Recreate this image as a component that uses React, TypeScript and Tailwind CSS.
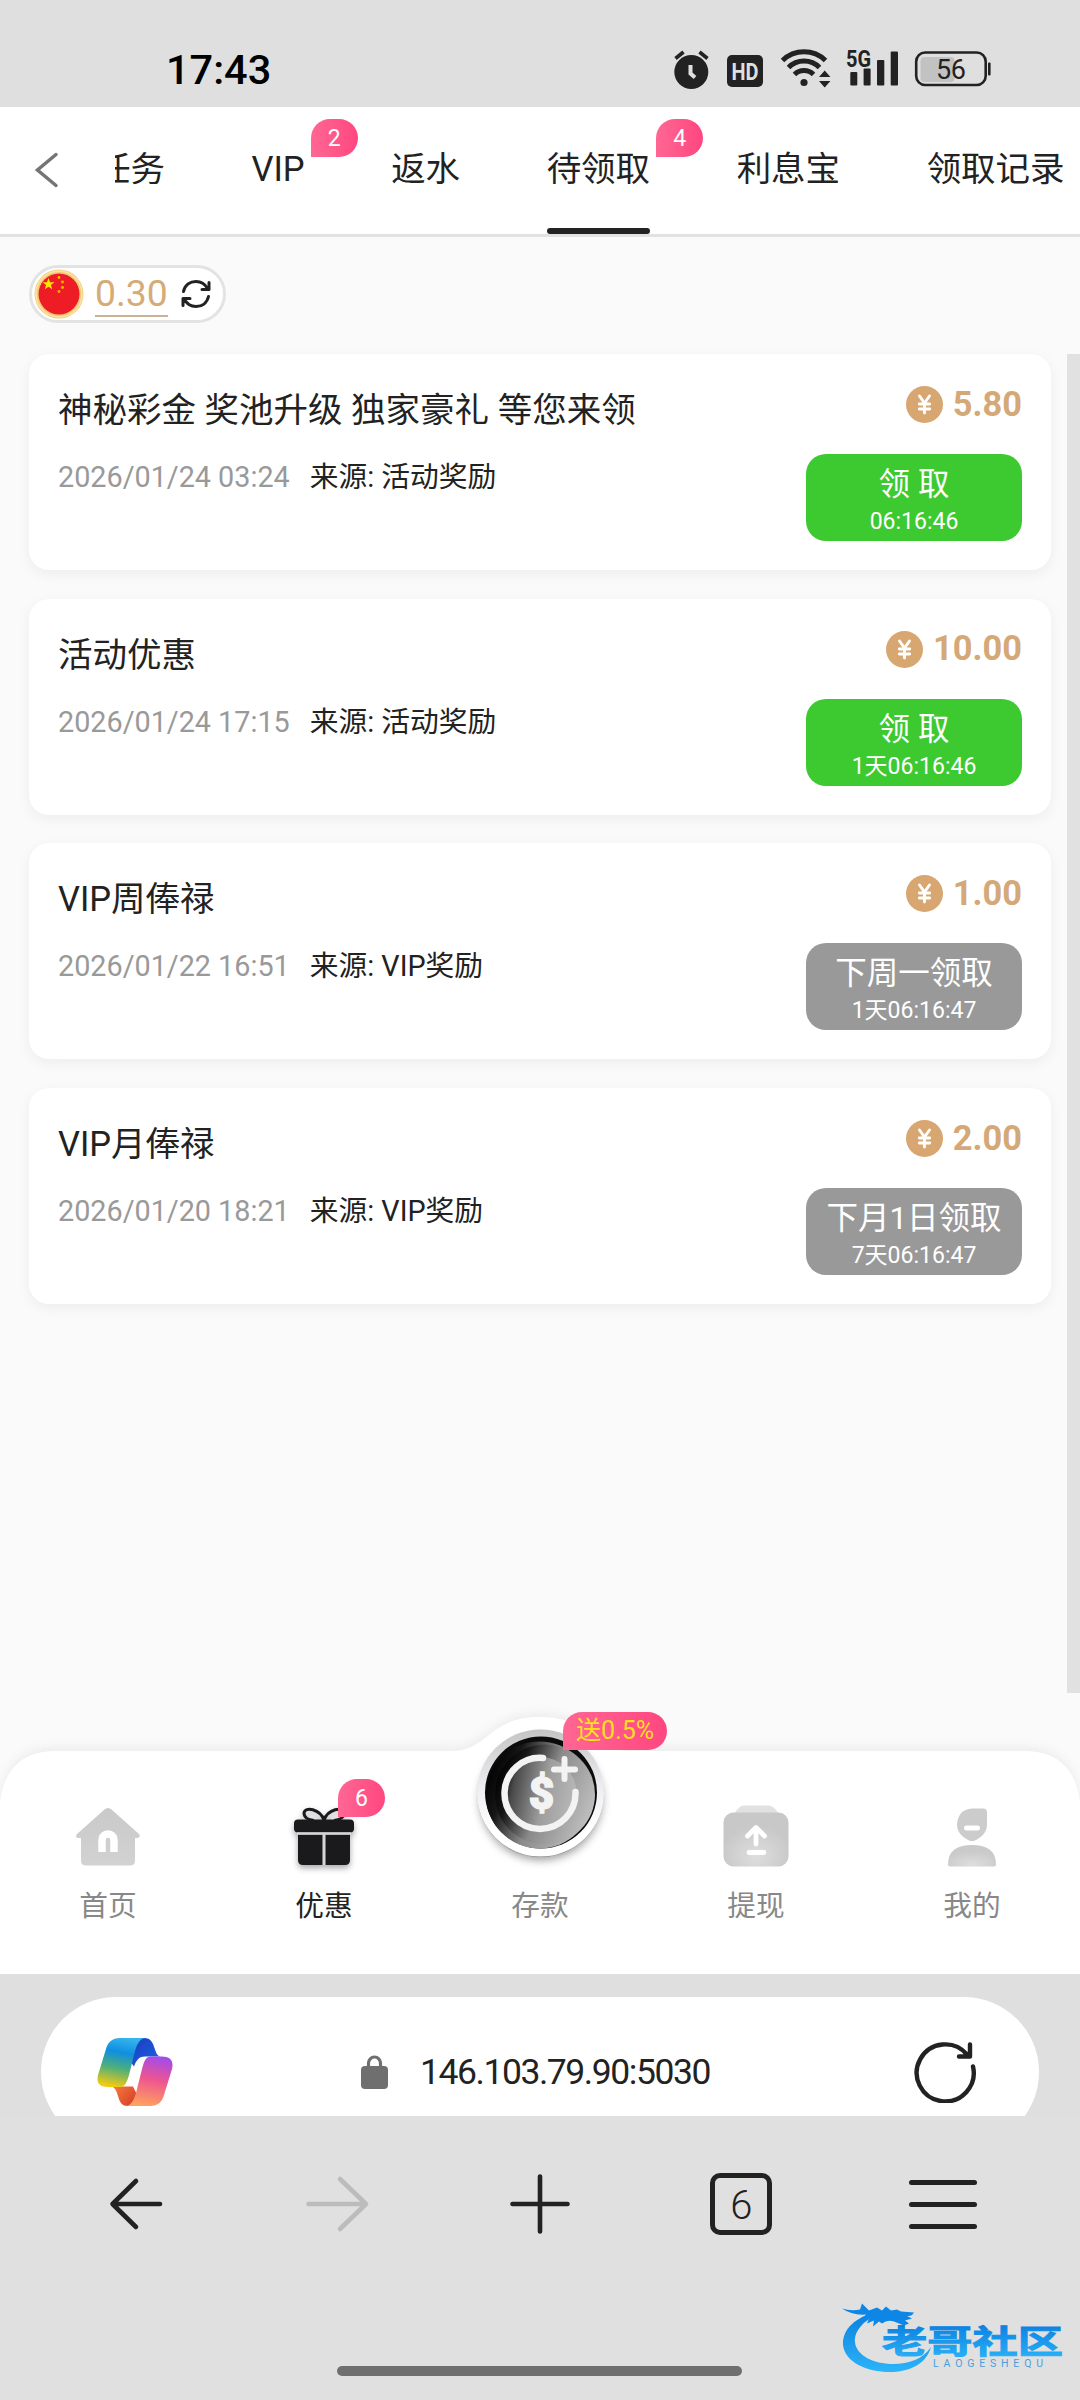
import { ReactNode } from 'react';

type Reward = {
  title: string;
  date: string;
  source: string;
  amount: string;
  action: string;
  countdown: string;
  ready: boolean;
};

const tabs = [
  { label: '任务' },
  { label: 'VIP', badge: 2 },
  { label: '返水' },
  { label: '待领取', badge: 4, active: true },
  { label: '利息宝' },
  { label: '领取记录' },
];

const rewards: Reward[] = [
  { title: '神秘彩金 奖池升级 独家豪礼 等您来领', date: '2026/01/24 03:24', source: '活动奖励', amount: '5.80', action: '领 取', countdown: '06:16:46', ready: true },
  { title: '活动优惠', date: '2026/01/24 17:15', source: '活动奖励', amount: '10.00', action: '领 取', countdown: '1天06:16:46', ready: true },
  { title: 'VIP周俸禄', date: '2026/01/22 16:51', source: 'VIP奖励', amount: '1.00', action: '下周一领取', countdown: '1天06:16:47', ready: false },
  { title: 'VIP月俸禄', date: '2026/01/20 18:21', source: 'VIP奖励', amount: '2.00', action: '下月1日领取', countdown: '7天06:16:47', ready: false },
];

function StatusBar() {
  return (
    <div className="flex h-[107px] shrink-0 items-start bg-[#dfdfdf] pl-[166px]">
      <div className="mt-[45px] w-[508px] text-[41.5px] leading-[50px] font-medium text-black">17:43</div>
      {/* alarm, HD, wifi, signal, battery */}
      <svg className="mt-[44px]" width="330" height="50" viewBox="674 44 330 50" fill="#222">
        <path d="M675.5 58.5l8-6.5M707.5 58.5l-8-6.5" stroke="#222" strokeWidth="3.6" />
        <circle cx="691.3" cy="72" r="17" />
        <path d="M690.5 65v8.5l4.5 4" stroke="#dfdfdf" strokeWidth="4" fill="none" />
        <rect x="727" y="55" width="36" height="32" rx="5" />
        <text x="745" y="79.5" textAnchor="middle" fontSize="23" fontWeight="700" textLength="27" lengthAdjust="spacingAndGlyphs" fill="#dfdfdf">HD</text>
        <g fill="none" stroke="#222" strokeWidth="5">
          <path d="M782.5 60.5a31 31 0 0 1 43 0" />
          <path d="M788.5 67.5a22 22 0 0 1 31 0" />
          <path d="M794.5 74.5a13.5 13.5 0 0 1 19 0" />
        </g>
        <circle cx="804" cy="82.5" r="3.6" />
        <path d="M819 77l5.7-6.5 5.7 6.5zM819 81l5.7 6.5 5.7-6.5z" />
        <text x="846" y="66.5" fontSize="23" fontWeight="700" textLength="25" lengthAdjust="spacingAndGlyphs">5G</text>
        <rect x="850.3" y="72" width="7" height="13.5" rx="1" />
        <rect x="863.6" y="68.5" width="7" height="17" rx="1" />
        <rect x="877" y="60" width="7.3" height="25.5" rx="1" />
        <rect x="890.7" y="51.5" width="7.3" height="34" rx="1" />
        <rect x="920.5" y="57" width="34" height="25" rx="4" fill="#c2c2c2" />
        <rect x="916.2" y="52.5" width="69.5" height="32.5" rx="9" fill="none" stroke="#222" strokeWidth="2.6" />
        <rect x="988" y="62.5" width="2.6" height="13" rx="1" />
        <text x="951" y="78.5" textAnchor="middle" fontSize="27" textLength="30">56</text>
      </svg>
    </div>
  );
}

function CountBadge({ count, className }: { count: number; className: string }) {
  return (
    <span className={`absolute flex h-[38px] w-[47px] items-center justify-center rounded-[22px] rounded-bl-none bg-gradient-to-r from-[#ff6694] to-[#ff4680] text-[23px] leading-none text-white ${className}`}>
      {count}
    </span>
  );
}

function TabBar() {
  return (
    <div className="flex h-[130px] shrink-0 border-b-[3px] border-[#e2e2e2] bg-white pl-[34px]">
      <svg className="mt-[45px] mr-[56px]" width="25" height="36" viewBox="0 0 25 36" fill="none" stroke="#757575" strokeWidth="3.5" strokeLinecap="round">
        <path d="M22 2.5L3.5 18 22 33.5" />
      </svg>
      {/* the strip is scrolled a little, so the first tab is cut off */}
      <div className="flex flex-1 gap-[86.5px] overflow-hidden">
        {tabs.map((tab) => (
          <div key={tab.label} className="relative flex h-full shrink-0 flex-col justify-between pt-[38px] text-[34.5px] leading-[48px] text-[#222] first:-ml-[19px]">
            <span>{tab.label}</span>
            {tab.badge && <CountBadge count={tab.badge} className="top-[12px] left-[calc(100%+6px)]" />}
            {tab.active && <span className="h-[6px] rounded-full bg-[#222]" />}
          </div>
        ))}
      </div>
    </div>
  );
}

function Balance() {
  return (
    <div className="mt-[28px] flex h-[58px] w-[197px] items-center rounded-full border-[3px] border-[#e2e3e3] bg-white pl-[2px]">
      <svg width="50" height="50" viewBox="0 0 50 50">
        <circle cx="25" cy="25" r="24.5" fill="#f3cb7c" />
        <circle cx="25" cy="25" r="23" fill="none" stroke="#fbe3a4" strokeWidth="1.5" />
        <circle cx="25" cy="25" r="20.5" fill="#ee1c25" />
        <path d="M14.5 9l1.5 4.3h4.5l-3.6 2.7 1.3 4.3-3.7-2.6-3.7 2.6 1.3-4.3L8.5 13.3H13z" fill="#ffe600" />
        <g fill="#ffb400">
          <circle cx="25" cy="8.5" r="1.4" />
          <circle cx="28.5" cy="13" r="1.4" />
          <circle cx="28.5" cy="18.5" r="1.4" />
          <circle cx="25" cy="22.5" r="1.4" />
        </g>
      </svg>
      <span className="ml-[11px] h-[46px] border-b-2 border-[#cbb293] text-[37.3px] leading-[44px] text-[#d5ab78]">0.30</span>
      <svg className="ml-[12px]" width="32" height="30" viewBox="0 0 32 30" fill="none" stroke="#222" strokeWidth="3" strokeLinecap="round" strokeLinejoin="round">
        <path d="M3.5 12.5C5 6 10 2.5 16 2.5c5 0 9 2.5 11.5 7M29 3.5v7h-7" />
        <path d="M28.5 17.5C27 24 22 27.5 16 27.5c-5 0-9-2.5-11.5-7M3 26.5v-7h7" />
      </svg>
    </div>
  );
}

function RewardCard({ reward }: { reward: Reward }) {
  return (
    <div className="flex h-[216px] justify-between rounded-[20px] bg-white px-[29px] shadow-[0_4px_14px_rgba(0,0,0,0.055)]">
      <div className="pt-[32px]">
        <h2 className="text-[34.5px] leading-[48px] text-[#222]">{reward.title}</h2>
        <p className="mt-[23px] flex gap-[20px] text-[28.75px] leading-[40px] text-[#222]">
          <span className="text-[#999]">{reward.date}</span>
          <span>来源: {reward.source}</span>
        </p>
      </div>
      <div className="flex flex-col items-end pt-[30px]">
        <div className="flex h-[41px] items-center gap-[10px] text-[34.4px] leading-[41px] font-bold text-[#d5a878]">
          <svg width="37" height="37" viewBox="0 0 37 37">
            <circle cx="18.5" cy="18.5" r="18.5" fill="#d8a670" />
            <path d="M13.5 10l5 7 5-7M13.3 18h10.4M13.3 23h10.4M18.5 17v10" fill="none" stroke="#fff" strokeWidth="2.9" strokeLinecap="round" />
          </svg>
          <span className="-mt-px">{reward.amount}</span>
        </div>
        <button className={`mt-[29px] flex h-[87px] w-[216px] flex-col items-center rounded-[20px] pt-[9px] text-white ${reward.ready ? 'bg-[#3dc930]' : 'bg-[#999]'}`}>
          <span className="text-[31.5px] leading-[44px] whitespace-pre">{reward.action}</span>
          <span className="text-[23px] leading-[30px]">{reward.countdown}</span>
        </button>
      </div>
    </div>
  );
}

function HomeIcon() {
  return (
    <svg width="66" height="60" viewBox="0 0 66 60">
      <defs>
        <linearGradient id="home" x1="0" y1="0" x2="0" y2="1">
          <stop offset="0" stopColor="#c9c9c9" />
          <stop offset="1" stopColor="#d2d2d2" />
        </linearGradient>
      </defs>
      <path d="M29.5 2.5q3.5-3 7 0L64 27q2 3-1.5 4H60v22.5q0 5-5 5H11q-5 0-5-5V31H3Q-.5 30 2 27z" fill="url(#home)" />
      <path d="M27 45V33a6 6 0 0 1 12 0v12" fill="none" stroke="#fff" strokeWidth="7.5" />
    </svg>
  );
}

function GiftIcon() {
  return (
    <svg className="drop-shadow-[0_3px_3px_rgba(0,0,0,0.35)]" width="62" height="60" viewBox="0 0 62 60">
      <path d="M31 13C27 2 12-1 11 6c0 4 4 7 10 7.5M31 13C35 2 50-1 51 6c0 4-4 7-10 7.5" fill="none" stroke="#1a1a1c" strokeWidth="3" />
      <rect x="1" y="12.5" width="60" height="13" rx="4" fill="#1a1a1c" />
      <path d="M5 27.5h24.5V58H10q-5 0-5-5z" fill="#1a1a1c" />
      <path d="M32.5 27.5H57V53q0 5-5 5H32.5z" fill="#1a1a1c" />
      <path d="M4 26.5h54M31 27v31" stroke="#d5d5d5" strokeWidth="2.4" />
    </svg>
  );
}

function WithdrawIcon() {
  return (
    <svg width="66" height="62" viewBox="0 0 66 62">
      <defs>
        <radialGradient id="wd" cx="0.5" cy="0.8" r="0.55">
          <stop offset="0" stopColor="#dedede" />
          <stop offset="1" stopColor="#c8c8c8" />
        </radialGradient>
      </defs>
      <path d="M11 9q5-8.5 10-8.5h24Q51 .5 56 9z" fill="#e1e1e1" />
      <rect x=".5" y="7.5" width="65" height="54" rx="10" fill="url(#wd)" />
      <path d="M33 39V23M24.5 31l8.5-8.5 8.5 8.5M26 47.5h15" fill="none" stroke="#fff" strokeWidth="4.8" strokeLinecap="round" strokeLinejoin="round" />
    </svg>
  );
}

function UserIcon() {
  return (
    <svg width="50" height="60" viewBox="0 0 50 60">
      <defs>
        <radialGradient id="usr" cx="0.5" cy="0.9" r="0.6">
          <stop offset="0" stopColor="#dedede" />
          <stop offset="1" stopColor="#cacaca" />
        </radialGradient>
      </defs>
      <path d="M25 1.5h11q4 0 4 4v12c0 8-6 13-12 16q-3 1-6 0C15 30 10 25 10 17.500Q11 2.500 25 1.500z" fill="#cccccc" />
      <path d="M19.5 21h11" stroke="#fff" strokeWidth="5" strokeLinecap="round" />
      <path d="M1 57.5q0-19.5 24-19.5t24 19.5q0 2-2 2H3q-2 0-2-2z" fill="url(#usr)" />
    </svg>
  );
}

function CoinIcon() {
  return (
    <svg width="150" height="160" viewBox="465 1720 150 160">
      <defs>
        <linearGradient id="rim" x1="0" y1="0" x2="0" y2="1">
          <stop offset="0" stopColor="#c4c4c4" />
          <stop offset="0.45" stopColor="#eeeef2" />
          <stop offset="0.8" stopColor="#ffffff" />
        </linearGradient>
        <linearGradient id="ring" x1="0" y1="0.3" x2="1" y2="0.7">
          <stop offset="0" stopColor="#000" />
          <stop offset="0.2" stopColor="#161616" />
          <stop offset="0.5" stopColor="#8a8a8a" />
          <stop offset="1" stopColor="#c2c2c2" />
        </linearGradient>
        <linearGradient id="face" x1="0" y1="0.4" x2="1" y2="0.6">
          <stop offset="0" stopColor="#1c1c1c" />
          <stop offset="0.12" stopColor="#4a4a4a" />
          <stop offset="0.55" stopColor="#9d9d9d" />
          <stop offset="1" stopColor="#b9b9b9" />
        </linearGradient>
        <filter id="soft" x="-20%" y="-20%" width="140%" height="140%">
          <feGaussianBlur stdDeviation="5" />
        </filter>
      </defs>
      <circle cx="541" cy="1799" r="61" fill="#000" opacity="0.4" filter="url(#soft)" />
      <circle cx="540.5" cy="1794" r="63" fill="#77777c" />
      <circle cx="540.5" cy="1793" r="63.5" fill="url(#rim)" />
      <circle cx="541" cy="1792.5" r="56" fill="#0b0b0b" />
      <circle cx="539.5" cy="1795" r="53.5" fill="url(#ring)" />
      <circle cx="545" cy="1794.5" r="50" fill="url(#ring)" />
      <circle cx="540.5" cy="1793" r="36" fill="url(#face)" />
      <path d="M543 1758A35.500 35.500 0 1 0 575.500 1792" fill="none" stroke="#f3f3f3" strokeWidth="6.5" strokeLinecap="round" />
      <path d="M564.5 1759v20M554 1769.5h21" stroke="#f3f3f3" strokeWidth="6" strokeLinecap="round" />
      <text x="541.5" y="1809" textAnchor="middle" fontSize="44" fontWeight="900" fill="#f3f3f3" stroke="#f3f3f3" strokeWidth="1.5">$</text>
    </svg>
  );
}

function NavItem({ label, active, children }: { label: string; active?: boolean; children: ReactNode }) {
  return (
    <div className={`relative flex w-[216px] flex-col items-center justify-end pb-[48px] text-[28.7px] leading-[40px] ${active ? 'text-[#222]' : 'text-[#888]'}`}>
      {children}
      <span className="mt-[19px]">{label}</span>
    </div>
  );
}

function BottomNav() {
  return (
    <nav className="relative flex h-[223px] shrink-0">
      <svg className="absolute -top-[51px] left-0" width="1080" height="274" viewBox="0 0 1080 274">
        <path
          d="M0 274V103Q6 51 56 51H450C490 51 487 17 540 17S590 51 630 51H1024Q1074 51 1080 103V274z"
          fill="#fff"
          className="drop-shadow-[0_-4px_5px_rgba(0,0,0,0.05)]"
        />
      </svg>
      <NavItem label="首页"><HomeIcon /></NavItem>
      <NavItem label="优惠" active>
        <GiftIcon />
        <CountBadge count={6} className="top-[28px] left-[122px]" />
      </NavItem>
      <NavItem label="存款">
        <div className="absolute -top-[31px] left-[33px]"><CoinIcon /></div>
        <span className="absolute -top-[39px] left-[131px] flex h-[38px] w-[104px] items-center justify-center rounded-[19px] rounded-bl-none bg-gradient-to-r from-[#ff6694] to-[#ff4680] pb-[2px] text-[25px] leading-none text-[#ffde1f]">送0.5%</span>
      </NavItem>
      <NavItem label="提现"><WithdrawIcon /></NavItem>
      <NavItem label="我的"><UserIcon /></NavItem>
    </nav>
  );
}

function CopilotIcon() {
  return (
    <svg width="76" height="70" viewBox="0 0 76 70">
      <defs>
        <linearGradient id="cpA" x1="0.6" y1="0" x2="0.4" y2="1">
          <stop offset="0" stopColor="#36b4ee" />
          <stop offset="0.3" stopColor="#0f8fe0" />
          <stop offset="0.62" stopColor="#4cae7c" />
          <stop offset="1" stopColor="#f2cb12" />
        </linearGradient>
        <linearGradient id="cpB" x1="0.6" y1="0" x2="0.4" y2="1">
          <stop offset="0" stopColor="#a44be8" />
          <stop offset="0.45" stopColor="#ee5590" />
          <stop offset="1" stopColor="#ffa25c" />
        </linearGradient>
        <linearGradient id="cpC" x1="0" y1="0" x2="1" y2="1">
          <stop offset="0" stopColor="#1a3cb8" />
          <stop offset="1" stopColor="#1e62ea" />
        </linearGradient>
        <linearGradient id="cpD" x1="0" y1="0" x2="1" y2="0.6">
          <stop offset="0" stopColor="#f7803c" />
          <stop offset="1" stopColor="#d8402a" />
        </linearGradient>
      </defs>
      <path d="M38 1h9c7 0 9 5 10.5 10s3 8 6 8.5H48c-7 0-9 5-11 10l-6-8z" fill="url(#cpC)" />
      <path d="M14 49.5h22l6 12-5 6.5-6 1c-7 0-8.500-5-10-10s-3-9-7-9.500z" fill="url(#cpD)" />
      <path d="M23 1h25c-6 1-8 7-10 13l-6 24c-2 7-4 12-9 12H11C3 50-1 47 1 38L9 12C11 5 15 1 23 1z" fill="url(#cpA)" />
      <path d="M53 69H29c6-1 8-7 10-13l6-24c2-8 4-12.500 9-12.500h11c8 0 12 4 10 12.500l-8 26c-2 7-6 11-14 11z" fill="url(#cpB)" />
    </svg>
  );
}

function AddressBar() {
  return (
    <div className="h-[142px] shrink-0 overflow-hidden bg-[#dfdfdf] px-[41px] pt-[23px]">
      <div className="flex h-[150px] items-center rounded-[75px] bg-white pl-[56px]">
        <CopilotIcon />
        <svg className="ml-[187px]" width="29" height="36" viewBox="0 0 29 36">
          <path d="M8.5 14V9a6 6 0 0 1 12 0v5" fill="none" stroke="#6f6f6f" strokeWidth="3.2" />
          <rect x="1" y="12" width="27" height="23" rx="4" fill="#6f6f6f" />
        </svg>
        <span className="mt-[2px] ml-[31px] w-[493px] text-[35.5px] tracking-[-1.45px] text-[#222]">146.103.79.90:5030</span>
        <svg className="mb-[2px]" width="64" height="64" viewBox="0 0 64 64" fill="none" stroke="#222" strokeWidth="4.4" strokeLinecap="round" strokeLinejoin="round">
          <path d="M60 27.5A28.5 28.5 0 1 1 54 15.5M57 5.5V17.5H46" />
        </svg>
      </div>
    </div>
  );
}

function BrowserToolbar() {
  return (
    <div className="relative flex flex-1 flex-col items-center bg-[#e0e0e0]">
      <div className="flex h-[176px] w-full items-center justify-between pr-[103px] pl-[108px]">
        <svg width="56" height="56" viewBox="0 0 56 56" fill="none" stroke="#222" strokeWidth="4.6" strokeLinecap="round" strokeLinejoin="round">
          <path d="M52 28H5M28 5L4.5 28 28 51" />
        </svg>
        <svg className="ml-[42px]" width="64" height="60" viewBox="0 0 64 60" fill="none" stroke="#bcbcbc" strokeWidth="4.6" strokeLinecap="round" strokeLinejoin="round">
          <path d="M2.5 30H59M34 5l26 25-26 25" />
        </svg>
        <svg className="ml-[39px]" width="62" height="62" viewBox="0 0 62 62" stroke="#222" strokeWidth="4.6" strokeLinecap="round">
          <path d="M31 3.5v55M3.5 31h55" />
        </svg>
        <div className="ml-[40px] flex h-[62px] w-[62px] items-center justify-center rounded-[10px] border-[5px] border-[#222] pt-[4px] text-[40px] leading-none font-[350] text-[#222]">6</div>
        <div className="ml-[37px] flex w-[68px] flex-col gap-[17px]">
          <span className="h-[5px] rounded-full bg-[#222]" />
          <span className="h-[5px] rounded-full bg-[#222]" />
          <span className="h-[5px] rounded-full bg-[#222]" />
        </div>
      </div>
      <span className="mt-[74px] mr-[2px] h-[10px] w-[405px] rounded-full bg-[#6f6f6f]" />
      <Watermark />
    </div>
  );
}

function Watermark() {
  return (
    <svg className="absolute right-[10px] bottom-[20px]" width="232" height="80" viewBox="838 2300 232 80">
      <defs>
        <linearGradient id="wm" x1="0" y1="0" x2="0" y2="1">
          <stop offset="0" stopColor="#0a7fe0" />
          <stop offset="1" stopColor="#2cb4f8" />
        </linearGradient>
      </defs>
      <path d="M876 2312c-20 5-34 17-33 33 2 18 26 28 50 27 20-1 34-10 38-25-8 12-22 17-38 17-20 0-37-9-38-22-1-11 9-22 24-28z" fill="url(#wm)" />
      <path d="M842 2308.5q9 3 18 1l2-6 7 7 8-3 5 3 4-4 5 4 6-1 4 2 13 1q-2 4-7 3.5l5 2.5-7 2 4 3-5 2-10-4q-7-2-12 2l-3-2-6 5 1-6-7 3 2-5-9 4 6-8q-14 1-24-6z" fill="#0d86e6" />
      <text x="882" y="2353" fontSize="32" fontWeight="700" textLength="181" lengthAdjust="spacingAndGlyphs" fill="url(#wm)" stroke="url(#wm)" strokeWidth="1">老哥社区</text>
      <text x="933" y="2367" fontSize="10.5" textLength="110" fill="#4b9fdb">LAOGESHEQU</text>
    </svg>
  );
}

export default function App() {
  return (
    <div className="flex h-[2400px] w-[1080px] flex-col overflow-hidden bg-[#fafafa] font-[Roboto,'Noto_Sans_CJK_SC',sans-serif]">
      <StatusBar />
      <TabBar />
      <main className="flex h-[1514px] shrink-0 bg-[#fafafa]">
        <div className="flex flex-1 flex-col pr-[16px] pl-[29px]">
          <Balance />
          <div className="mt-[31px] flex flex-col gap-[28.7px]">
            {rewards.map((reward) => (
              <RewardCard key={reward.title} reward={reward} />
            ))}
          </div>
        </div>
        <div className="mt-[117px] h-[1339px] w-[13px] bg-[#e1e1e1]" />
      </main>
      <BottomNav />
      <AddressBar />
      <BrowserToolbar />
    </div>
  );
}
